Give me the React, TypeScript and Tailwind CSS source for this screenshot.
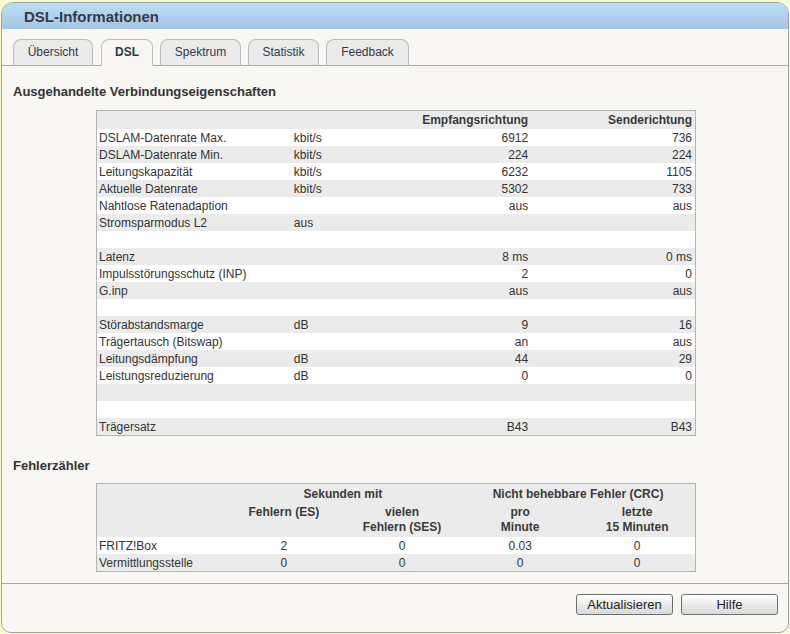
import React from "react";

type Row = { label: string; unit?: string; rx?: string; tx?: string };

const rows: Row[] = [
  { label: "DSLAM-Datenrate Max.", unit: "kbit/s", rx: "6912", tx: "736" },
  { label: "DSLAM-Datenrate Min.", unit: "kbit/s", rx: "224", tx: "224" },
  { label: "Leitungskapazität", unit: "kbit/s", rx: "6232", tx: "1105" },
  { label: "Aktuelle Datenrate", unit: "kbit/s", rx: "5302", tx: "733" },
  { label: "Nahtlose Ratenadaption", rx: "aus", tx: "aus" },
  { label: "Stromsparmodus L2", unit: "aus" },
  { label: "" },
  { label: "Latenz", rx: "8 ms", tx: "0 ms" },
  { label: "Impulsstörungsschutz (INP)", rx: "2", tx: "0" },
  { label: "G.inp", rx: "aus", tx: "aus" },
  { label: "" },
  { label: "Störabstandsmarge", unit: "dB", rx: "9", tx: "16" },
  { label: "Trägertausch (Bitswap)", rx: "an", tx: "aus" },
  { label: "Leitungsdämpfung", unit: "dB", rx: "44", tx: "29" },
  { label: "Leistungsreduzierung", unit: "dB", rx: "0", tx: "0" },
  { label: "" },
  { label: "" },
  { label: "Trägersatz", rx: "B43", tx: "B43" },
];

const errors = [
  { label: "FRITZ!Box", es: "2", ses: "0", min: "0.03", q: "0" },
  { label: "Vermittlungsstelle", es: "0", ses: "0", min: "0", q: "0" },
];

const tabs = [
  { name: "Übersicht", w: "w-[80px] mr-[1px]" },
  { name: "DSL", w: "w-[52px]" },
  { name: "Spektrum", w: "w-[81px]" },
  { name: "Statistik", w: "w-[71px]" },
  { name: "Feedback", w: "w-[83px]" },
];

export default function App() {
  return (
    <div
      className="h-[634px] w-[790px] bg-[#fbfbd2] pt-[2px] px-[1px] text-[#333]"
      style={{ fontFamily: '"Liberation Sans", Arial, sans-serif' }}
    >
      <div className="flex h-[631px] flex-col overflow-hidden rounded-t-[12px] rounded-b-[10px] border border-[#9ba7a0] bg-[#f8f7f3]">
        {/* title bar */}
        <div className="h-[26px] shrink-0 bg-gradient-to-b from-[#bedcf6] to-[#a5c6e4] pl-[22px] text-[15px] font-bold leading-[28px] text-[#353b40]">
          DSL-Informationen
        </div>

        {/* tabs */}
        <div className="flex shrink-0 gap-[7px] border-b border-[#a9ada9] pl-[11px] pt-[10px]">
          {tabs.map((t) => (
            <div
              key={t.name}
              className={`${t.w} -mb-px h-[27px] rounded-t-[8px] border border-[#bdbdbd] text-center text-[12px] leading-[25px] text-[#2e3a46] ${
                t.name === "DSL"
                  ? "border-b-[#f8f7f3] bg-[#f8f7f3] font-bold"
                  : "border-b-[#a9ada9] bg-[#ebebeb]"
              }`}
            >
              {t.name}
            </div>
          ))}
        </div>

        {/* content */}
        <div className="flex-1 px-[11px] pt-[18px]">
          <h2 className="text-[13px] font-bold leading-[16px] text-[#333]">
            Ausgehandelte Verbindungseigenschaften
          </h2>

          <table className="ml-[83px] mt-[10px] w-[600px] table-fixed border-collapse border border-[#b5b5b5] text-[12px]">
            <colgroup>
              <col className="w-[196px]" />
              <col className="w-[107px]" />
              <col className="w-[131px]" />
              <col className="w-[164px]" />
            </colgroup>
            <thead>
              <tr className="h-[18px] bg-[#ebebeb] font-bold leading-[18px] text-[#3a3a3a]">
                <th />
                <th />
                <th className="pr-[3px] text-right">Empfangsrichtung</th>
                <th className="pr-[3px] text-right">Senderichtung</th>
              </tr>
            </thead>
            <tbody>
              {rows.map((r, i) => (
                <tr
                  key={i}
                  className={`h-[17px] leading-[15px] ${i % 2 === 0 ? "bg-white" : "bg-[#ebebeb]"}`}
                >
                  <td className="whitespace-nowrap pl-[2px] pt-[2px]">{r.label}</td>
                  <td className="pl-[1px] pt-[2px]">{r.unit}</td>
                  <td className="pr-[3px] pt-[2px] text-right">{r.rx}</td>
                  <td className="pr-[3px] pt-[2px] text-right">{r.tx}</td>
                </tr>
              ))}
            </tbody>
          </table>

          <h2 className="mt-[22px] text-[13px] font-bold leading-[16px] text-[#333]">
            Fehlerzähler
          </h2>

          <table className="ml-[83px] mt-[9px] w-[600px] table-fixed border-collapse border border-[#b5b5b5] text-[12px]">
            <colgroup>
              <col className="w-[128px]" />
              <col className="w-[118px]" />
              <col className="w-[118px]" />
              <col className="w-[118px]" />
              <col className="w-[116px]" />
            </colgroup>
            <thead className="bg-[#ebebeb] font-bold text-[#3a3a3a]">
              <tr className="h-[19px] leading-[15px]">
                <th />
                <th colSpan={2} className="pt-[3px] text-center">
                  Sekunden mit
                </th>
                <th colSpan={2} className="pt-[3px] text-center">
                  Nicht behebbare Fehler (CRC)
                </th>
              </tr>
              <tr className="h-[34px] align-top leading-[15px]">
                <th />
                <th className="pt-[2px] text-center">Fehlern (ES)</th>
                <th className="pt-[2px] text-center">
                  vielen
                  <br />
                  Fehlern (SES)
                </th>
                <th className="pt-[2px] text-center">
                  pro
                  <br />
                  Minute
                </th>
                <th className="pt-[2px] text-center">
                  letzte
                  <br />
                  15 Minuten
                </th>
              </tr>
            </thead>
            <tbody>
              {errors.map((e, i) => (
                <tr
                  key={e.label}
                  className={`h-[17px] leading-[15px] ${i % 2 === 0 ? "bg-white" : "bg-[#ebebeb]"}`}
                >
                  <td className="pl-[2px] pt-[2px]">{e.label}</td>
                  <td className="pt-[2px] text-center">{e.es}</td>
                  <td className="pt-[2px] text-center">{e.ses}</td>
                  <td className="pt-[2px] text-center">{e.min}</td>
                  <td className="pt-[2px] text-center">{e.q}</td>
                </tr>
              ))}
            </tbody>
          </table>
        </div>

        {/* footer */}
        <div className="flex h-[49px] shrink-0 justify-end gap-[8px] border-t border-[#a3aca6] pr-[10px] pt-[10px]">
          <button className="h-[21px] w-[97px] rounded-[3px] border border-[#6f6f6f] bg-gradient-to-b from-white to-[#d9d9d9] text-[13px] leading-[19px] text-[#222]">
            Aktualisieren
          </button>
          <button className="h-[21px] w-[97px] rounded-[3px] border border-[#6f6f6f] bg-gradient-to-b from-white to-[#d9d9d9] text-[13px] leading-[19px] text-[#222]">
            Hilfe
          </button>
        </div>
      </div>
    </div>
  );
}
